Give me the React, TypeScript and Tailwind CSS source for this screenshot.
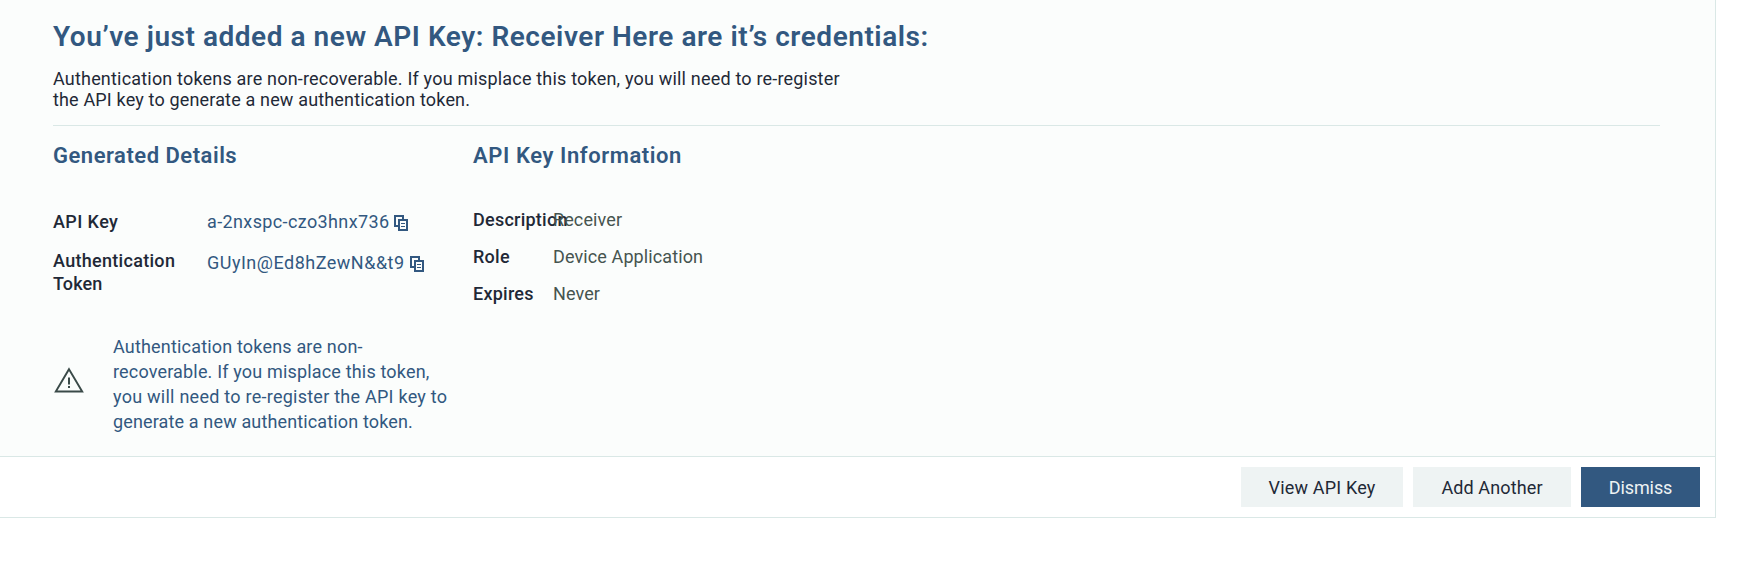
import type { ReactNode } from "react";

function CopyIcon() {
  return (
    <svg width="14" height="16" viewBox="0 0 14 16" fill="none" shapeRendering="crispEdges" className="block shrink-0">
      <path d="M9 4V1H1V11H5" stroke="#325880" strokeWidth="2" />
      <path d="M5 5H13V15H5Z" stroke="#325880" strokeWidth="2" />
      <path d="M7 8.5H11M7 11.5H11" stroke="#325880" strokeWidth="1" />
    </svg>
  );
}

function WarningIcon() {
  return (
    <svg width="30" height="26" viewBox="0 0 30 26" fill="none" className="block shrink-0">
      <path d="M15 2.2L28.2 24.5H1.8Z" stroke="#3a4a48" strokeWidth="1.9" />
      <path d="M14 10.5H16V17.5H14ZM14 19H16V21H14Z" fill="#3a4a48" />
    </svg>
  );
}

function InfoRow({ label, children }: { label: ReactNode; children: ReactNode }) {
  return (
    <div className="flex h-[25px] leading-[25px]">
      <dt className="w-20 shrink-0 whitespace-nowrap font-medium tracking-[0.25px] text-[#1f2937]">{label}</dt>
      <dd className="whitespace-nowrap tracking-[0.11px] text-[#46544f]">{children}</dd>
    </div>
  );
}

export default function App() {
  return (
    <div className="min-h-[579px] bg-white font-['Roboto','Liberation_Sans',sans-serif] text-[18px] text-[#1f2937]">
      <section className="w-[1716px] border-r border-b border-[#dae8e6]">
        <div className="h-[456px] bg-[#fbfdfc] pl-[53px] pr-[55px] pt-[19px]">
          <h1 className="text-[28px] font-semibold leading-9 tracking-[0.54px] text-[#325880] whitespace-nowrap">
            You’ve just added a new API Key: Receiver Here are it’s credentials:
          </h1>
          <p className="mt-[13px] leading-[21px] whitespace-nowrap">
            <span className="block tracking-[0.19px]">Authentication tokens are non-recoverable. If you misplace this token, you will need to re-register</span>
            <span className="block tracking-[0.16px]">the API key to generate a new authentication token.</span>
          </p>
          <hr className="mt-[15px] border-[#dae8e6]" />
          <div className="mt-4 flex whitespace-nowrap">
            <div className="w-[420px]">
              <h2 className="text-[22px] font-semibold leading-7 tracking-[0.51px] text-[#325880]">Generated Details</h2>
              <dl className="mt-[39px]">
                <div className="flex leading-[25px]">
                  <dt className="w-[154px] font-medium tracking-[0.4px]">API Key</dt>
                  <dd className="flex gap-[5px] text-[#325880]">
                    <span className="w-[182px] tracking-[0.38px]">a-2nxspc-czo3hnx736</span>
                    <span className="pt-1.5"><CopyIcon /></span>
                  </dd>
                </div>
                <div className="mt-[15px] flex">
                  <dt className="w-[154px] font-medium leading-[23px]">
                    <span className="block tracking-[0.3px]">Authentication</span>
                    <span className="block tracking-[0.1px]">Token</span>
                  </dt>
                  <dd className="mt-px flex gap-[5px] leading-[25px] text-[#325880]">
                    <span className="w-[198px] tracking-[0.5px]">GUyIn@Ed8hZewN&amp;&amp;t9</span>
                    <span className="pt-1.5"><CopyIcon /></span>
                  </dd>
                </div>
              </dl>
              <div className="mt-[39px] flex leading-[25px] text-[#325880]">
                <div className="w-[60px] pl-px pt-[33px]"><WarningIcon /></div>
                <p>
                  <span className="block tracking-[0.18px]">Authentication tokens are non-</span>
                  <span className="block tracking-[0.17px]">recoverable. If you misplace this token,</span>
                  <span className="block tracking-[0.25px]">you will need to re-register the API key to</span>
                  <span className="block tracking-[0.14px]">generate a new authentication token.</span>
                </p>
              </div>
            </div>
            <div>
              <h2 className="text-[22px] font-semibold leading-7 tracking-[0.58px] text-[#325880]">API Key Information</h2>
              <dl className="mt-[37px] flex flex-col gap-3">
                <InfoRow label="Description">Receiver</InfoRow>
                <InfoRow label="Role">Device Application</InfoRow>
                <InfoRow label="Expires">Never</InfoRow>
              </dl>
            </div>
          </div>
        </div>
        <footer className="flex h-[61px] items-center justify-end gap-2.5 border-t border-[#dae8e6] pr-[15px]">
          <button className="h-10 w-[162px] bg-[#eef3f3] tracking-[0.18px]">View API Key</button>
          <button className="h-10 w-[158px] bg-[#eef3f3] tracking-[0.12px]">Add Another</button>
          <button className="h-10 w-[119px] bg-[#325880] tracking-[-0.1px] text-[#eef3f3]">Dismiss</button>
        </footer>
      </section>
    </div>
  );
}
